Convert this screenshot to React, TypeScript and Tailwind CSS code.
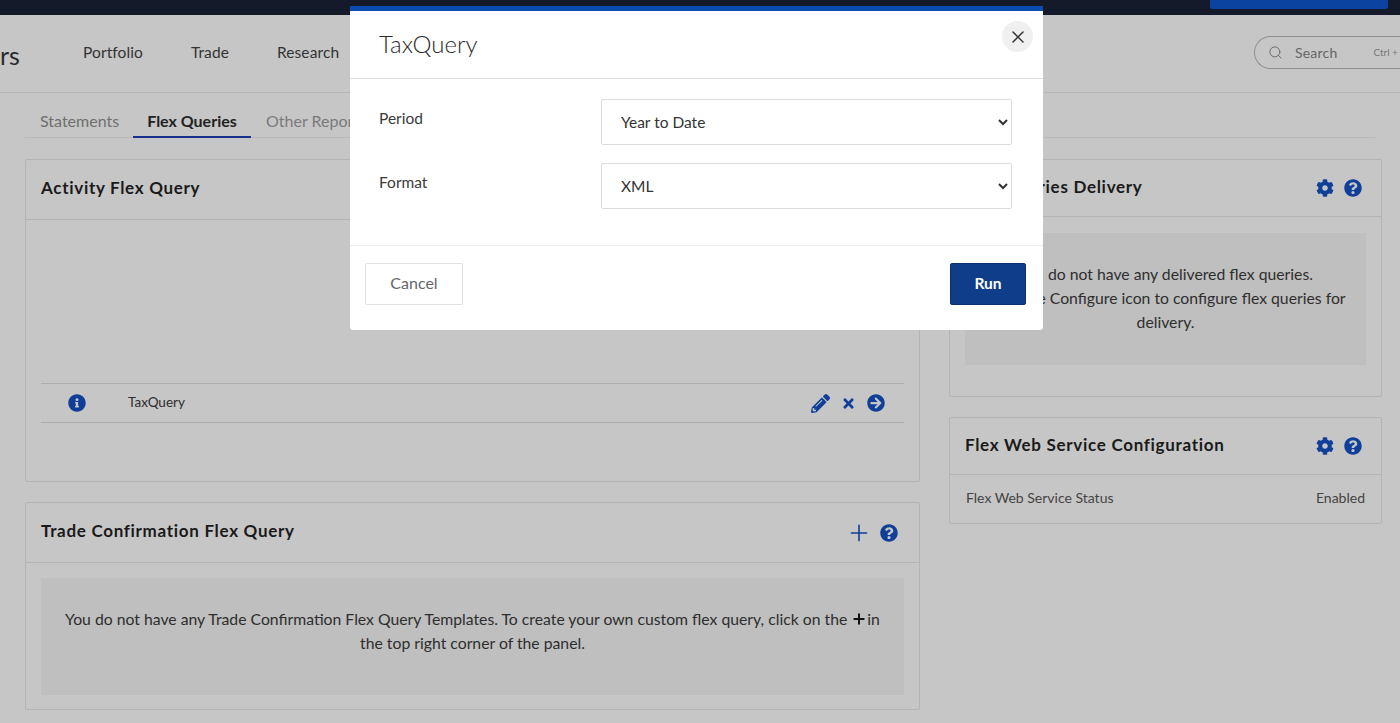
import { Plus, Search, X } from "lucide-react";
import {
  FaArrowCircleRight,
  FaCog,
  FaInfoCircle,
  FaPencilAlt,
  FaQuestionCircle,
  FaTimes,
} from "react-icons/fa";

const BLUE = "text-[#0f3f98]";

function PanelHeader({
  title,
  className,
  children,
}: {
  title: string;
  className: string;
  children: React.ReactNode;
}) {
  return (
    <div className={`flex items-center justify-between border-b border-[#b4b4b4] pl-[15px] ${className}`}>
      <h3 className="mb-[3px] text-[17px] font-bold tracking-[0.7px] text-[#1a1a1a]">{title}</h3>
      <div className="flex items-center gap-[10px]">{children}</div>
    </div>
  );
}

function Field({ label, value }: { label: string; value: string }) {
  return (
    <div className="flex h-[46px] items-start">
      <label className="mt-[8px] w-[222px] text-[15.5px] text-[#3a3a3a]">{label}</label>
      <select
        defaultValue={value}
        className="h-[46px] w-[411px] rounded-[2px] border border-[#dcdcdc] bg-white px-[15px] text-[15.5px] text-[#333]"
      >
        <option>{value}</option>
      </select>
    </div>
  );
}

export default function App() {
  return (
    <div className="relative h-[723px] w-[1400px] overflow-hidden bg-[#c6c6c6] font-['Lato','Liberation_Sans',sans-serif] text-[#333]">
      {/* top bar */}
      <div className="flex h-[15px] justify-end bg-[#141a29] pr-[12px]">
        <div className="h-[9px] w-[178px] rounded-b-[2px] bg-[#0a44a0]" />
      </div>

      {/* main nav */}
      <header className="flex h-[78px] items-center border-b border-[#b6b6b6]">
        <span className="w-[83px] pt-[4px] text-[25px] text-[#2b2b2b]">rs</span>
        <nav className="flex items-center gap-[48px] pb-[2px] text-[15.5px] tracking-[0.1px] text-[#333]">
          <span>Portfolio</span>
          <span>Trade</span>
          <span>Research</span>
        </nav>
        <div className="ml-auto mb-[2px] -mr-[1px] flex h-[33px] w-[147px] items-center rounded-l-full border-y border-l border-[#8f8f8f] pl-[13px]">
          <Search className="h-[15px] w-[15px] text-[#666]" strokeWidth={1.5} />
          <span className="ml-[12px] mb-[1px] text-[14px] tracking-[0.2px] text-[#666]">Search</span>
          <span className="ml-[36px] mb-[1px] whitespace-nowrap text-[10px] text-[#777]">Ctrl +</span>
        </div>
      </header>

      <main className="px-[25px]">
        {/* tabs */}
        <div className="flex h-[45px] items-end border-b border-[#b9b9b9] text-[16px]">
          <span className="w-[108px] pb-[4px] pl-[15px] text-[#6f6f6f]">Statements</span>
          <span className="-mb-px w-[118px] border-b-2 border-[#16308c] pb-[3px] text-center font-bold text-[#222]">
            Flex Queries
          </span>
          <span className="pb-[4px] pl-[15px] text-[#7a7a7a]">Other Reports</span>
        </div>

        <div className="mt-[21px] grid grid-cols-[895px_433px] gap-x-[29px]">
          <div className="flex flex-col gap-[20px]">
            {/* activity panel */}
            <section className="h-[323px] rounded-[2px] border border-[#b4b4b4]">
              <PanelHeader title="Activity Flex Query" className="h-[60px] pr-[21px]">
                <span />
              </PanelHeader>
              <div className="mx-[15px] mt-[163px] flex h-[40px] items-center border-y border-[#adadad] pb-[2px] text-[13.5px] text-[#2c2c2c]">
                <FaInfoCircle className={`ml-[27px] mt-[2px] h-[18px] w-[18px] ${BLUE}`} />
                <span className="ml-[42px]">TaxQuery</span>
                <div className="ml-auto mr-[19px] mt-[2px] flex items-center gap-[11px]">
                  <FaPencilAlt className={`h-[19px] w-[19px] ${BLUE}`} />
                  <FaTimes className={`h-[15px] w-[15px] ${BLUE}`} />
                  <FaArrowCircleRight className={`h-[18px] w-[18px] ${BLUE}`} />
                </div>
              </div>
            </section>

            {/* trade confirmation panel */}
            <section className="h-[208px] rounded-[2px] border border-[#b4b4b4]">
              <PanelHeader title="Trade Confirmation Flex Query" className="h-[60px] pr-[21px]">
                <Plus className={`-mr-[2px] h-[26px] w-[26px] ${BLUE}`} strokeWidth={1.5} />
                <FaQuestionCircle className={`h-[18px] w-[18px] ${BLUE}`} />
              </PanelHeader>
              <div className="mx-[15px] mt-[15px] h-[117px] bg-[#bfbfbf] pt-[29px] text-center text-[15.75px] leading-[24px] text-[#2e2e2e]">
                <p>
                  You do not have any Trade Confirmation Flex Query Templates. To create your own custom flex query,
                  click on the{" "}
                  <Plus className="inline h-[16px] w-[16px] align-[-2px] text-[#111]" strokeWidth={3} />
                  in
                  <br />
                  the top right corner of the panel.
                </p>
              </div>
            </section>
          </div>

          <div className="flex flex-col gap-[20px]">
            {/* delivery panel */}
            <section className="h-[238px] rounded-[2px] border border-[#b4b4b4]">
              <PanelHeader title="Flex Queries Delivery" className="h-[57px] pr-[19px]">
                <FaCog className={`h-[18px] w-[18px] ${BLUE}`} />
                <FaQuestionCircle className={`h-[18px] w-[18px] ${BLUE}`} />
              </PanelHeader>
              <div className="mx-[15px] mt-[16px] flex h-[132px] items-center justify-center bg-[#bfbfbf] pb-[2px] text-center text-[15.75px] leading-[24px] text-[#2e2e2e]">
                <p>
                  You do not have any delivered flex queries.
                  <br />
                  Click the Configure icon to configure flex queries for
                  <br />
                  delivery.
                </p>
              </div>
            </section>

            {/* web service panel */}
            <section className="h-[107px] rounded-[2px] border border-[#b4b4b4]">
              <PanelHeader title="Flex Web Service Configuration" className="h-[57px] pr-[19px]">
                <FaCog className={`h-[18px] w-[18px] ${BLUE}`} />
                <FaQuestionCircle className={`h-[18px] w-[18px] ${BLUE}`} />
              </PanelHeader>
              <div className="flex h-[48px] items-center justify-between px-[16px] pb-[3px] text-[14px] text-[#444]">
                <span>Flex Web Service Status</span>
                <span>Enabled</span>
              </div>
            </section>
          </div>
        </div>
      </main>

      {/* run dialog */}
      <div className="absolute left-[350px] top-[6px] w-[693px] rounded-b-[3px] border-t-[5px] border-[#0c4cb0] bg-white">
        <div className="flex h-[68px] items-start justify-between border-b border-[#dedede] pl-[29px] pr-[10px]">
          <h2 className="mt-[15px] text-[24px] font-light text-[#2a2a2a]">TaxQuery</h2>
          <button className="mt-[10px] flex h-[31px] w-[31px] items-center justify-center rounded-full bg-[#f0f0f0]">
            <X className="h-[20px] w-[20px] text-[#333]" strokeWidth={1.75} />
          </button>
        </div>
        <div className="flex h-[167px] flex-col gap-[18px] border-b border-[#ececec] pl-[29px] pt-[20px]">
          <Field label="Period" value="Year to Date" />
          <Field label="Format" value="XML" />
        </div>
        <div className="flex h-[84px] items-center justify-between pb-[8px] pl-[15px] pr-[17px]">
          <button className="h-[42px] w-[98px] rounded-[2px] border border-[#e2e2e2] pb-[2px] text-[16px] text-[#666]">
            Cancel
          </button>
          <button className="h-[42px] w-[76px] rounded-[2px] border border-[#0b2f6f] bg-[#0f3d8a] pb-[1px] text-[15.5px] font-bold text-white">
            Run
          </button>
        </div>
      </div>
    </div>
  );
}
